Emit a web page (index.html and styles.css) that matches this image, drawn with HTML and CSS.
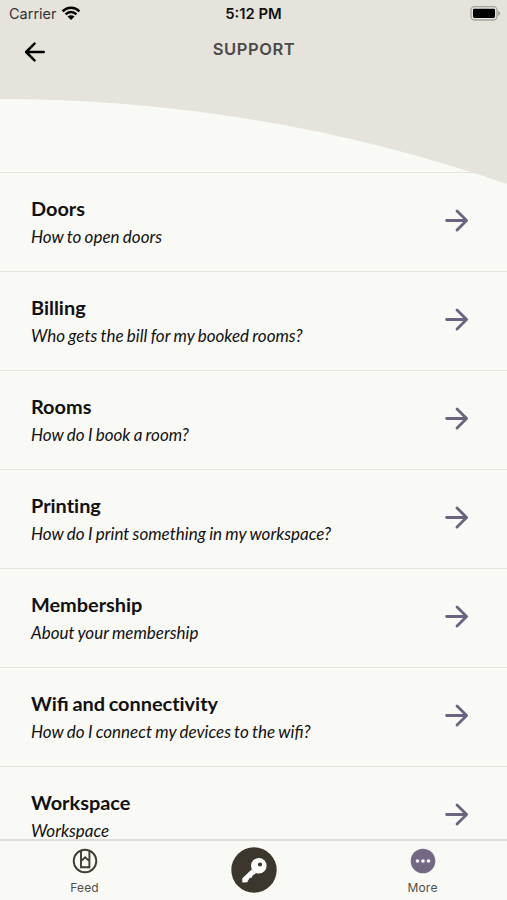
FILE: index.html
```
<!DOCTYPE html>
<html lang="en">
<head>
  <meta charset="UTF-8">
  <meta name="viewport" content="width=device-width, initial-scale=1.0">
  <title>Support</title>
  <link rel="stylesheet" href="styles.css">
</head>
<body>

  <!-- Shared icons -->
  <svg class="icon-defs" width="0" height="0">
    <symbol id="arrow" viewBox="0 0 24 24">
      <path d="M2.5 12H21.5M12.5 2.8L21.7 12L12.5 21.2" fill="none" stroke="currentColor" stroke-width="2.7" stroke-linecap="round" stroke-linejoin="round"/>
    </symbol>
  </svg>

  <div class="screen">
    <header class="header">
      <svg class="header-curve" viewBox="0 0 507 185">
        <path d="M0 0H507V184A1563 1563 0 0 0 0 99Z" fill="#e5e3db"/>
      </svg>

      <div class="status-bar">
        <div class="carrier">
          <span>Carrier</span>
          <svg width="20" height="15" viewBox="0 0 20 15">
            <path d="M1.6 5.3A12 12 0 0 1 18.4 5.3M4.6 8.3A7.7 7.7 0 0 1 15.4 8.3" fill="none" stroke="#000" stroke-width="2.5"/>
            <path d="M10 14L6.5 10.6A5 5 0 0 1 13.5 10.6Z" fill="#000"/>
          </svg>
        </div>
        <div class="time">5:12 PM</div>
        <div class="battery">
          <svg width="32" height="15" viewBox="0 0 32 15">
            <rect x="2" y="0.7" width="26" height="13.3" rx="3.5" fill="none" stroke="#a5a49f" stroke-width="1.3"/>
            <rect x="4" y="2.7" width="22" height="9.3" rx="1.4" fill="#000"/>
            <path d="M29.4 5C31.4 5.8 31.4 8.8 29.4 9.7Z" fill="#8c8b86"/>
          </svg>
        </div>
      </div>

      <div class="nav-bar">
        <svg class="back" width="22" height="22"><use href="#arrow"/></svg>
        <h1 class="page-title">SUPPORT</h1>
      </div>
    </header>

    <main class="list">
      <div class="row">
        <div>
          <h2>Doors</h2>
          <p>How to open doors</p>
        </div>
        <svg class="arrow"><use href="#arrow"/></svg>
      </div>
      <div class="row">
        <div>
          <h2>Billing</h2>
          <p>Who gets the bill for my booked rooms?</p>
        </div>
        <svg class="arrow"><use href="#arrow"/></svg>
      </div>
      <div class="row">
        <div>
          <h2>Rooms</h2>
          <p>How do I book a room?</p>
        </div>
        <svg class="arrow"><use href="#arrow"/></svg>
      </div>
      <div class="row">
        <div>
          <h2>Print&zwnj;ing</h2>
          <p>How do I print something in my workspace?</p>
        </div>
        <svg class="arrow"><use href="#arrow"/></svg>
      </div>
      <div class="row">
        <div>
          <h2>Membership</h2>
          <p>About your membership</p>
        </div>
        <svg class="arrow"><use href="#arrow"/></svg>
      </div>
      <div class="row">
        <div>
          <h2>Wifi and connect&zwnj;ivity</h2>
          <p>How do I connect my devices to the wifi?</p>
        </div>
        <svg class="arrow"><use href="#arrow"/></svg>
      </div>
      <div class="row">
        <div>
          <h2>Workspace</h2>
          <p>Workspace</p>
        </div>
        <svg class="arrow"><use href="#arrow"/></svg>
      </div>
    </main>

    <nav class="tab-bar">
      <a class="tab">
        <svg width="26" height="26" viewBox="0 0 26 26" fill="none" stroke="#403d33" stroke-width="1.9">
          <circle cx="13" cy="13" r="11.3"/>
          <path d="M9 2.5V19.3H17.4V2.5M9.6 12.6L13.2 9.2L16.8 12.6" stroke-width="1.9"/>
        </svg>
        <span>Feed</span>
      </a>
      <a class="tab tab-key">
        <svg width="46" height="46" viewBox="0 0 46 46">
          <circle cx="23" cy="23" r="22.7" fill="#3b372d"/>
          <circle cx="27.8" cy="18.8" r="7.8" fill="#fff"/>
          <path d="M20.6 22.6L25 26.2L21.6 28.4L20.8 30.6L18.6 31L16.2 35.2L11.4 35.6L11.2 31.6Z" fill="#fff"/>
          <circle cx="29" cy="17.5" r="2.1" fill="#3b372d"/>
        </svg>
      </a>
      <a class="tab">
        <svg width="26" height="26" viewBox="0 0 26 26">
          <circle cx="13" cy="13" r="12.3" fill="#736985"/>
          <g fill="#fff">
            <circle cx="7.5" cy="13" r="1.8"/>
            <circle cx="13" cy="13" r="1.8"/>
            <circle cx="18.5" cy="13" r="1.8"/>
          </g>
        </svg>
        <span>More</span>
      </a>
    </nav>
  </div>

</body>
</html>
```
FILE: styles.css
```
* {
  box-sizing: border-box;
}

body {
  margin: 0;
  background-color: #f9f9f5;
  font-family: Inter, sans-serif;
  color: #111;
}

.icon-defs {
  position: absolute;
}

.screen {
  display: flex;
  flex-direction: column;
  height: 900px;
  overflow: hidden;
}

/* Header */
.header {
  position: relative;
  height: 172px;
  flex-shrink: 0;
}

/* The curve hangs over the top of the list */
.header-curve {
  position: absolute;
  top: 0;
  left: 0;
  width: 507px;
  height: 185px;
  z-index: 1;
}

.status-bar,
.nav-bar {
  position: relative;
  z-index: 2;
}

.status-bar {
  display: grid;
  grid-template-columns: 1fr auto 1fr;
  align-items: center;
  height: 27px;
  padding: 0 6px 0 9px;
  font-size: 15px;
}

.carrier {
  display: flex;
  align-items: center;
  gap: 4px;
  color: #333;
  font-size: 14.5px;
}

.time {
  margin-right: 3px;
  font-size: 14.8px;
  font-weight: 600;
  color: #111;
}

.battery {
  display: flex;
  justify-content: flex-end;
}

.nav-bar {
  display: grid;
  grid-template-columns: 22px 1fr 22px;
  align-items: center;
  height: 50px;
  padding: 0 23px 0 24px;
}

.back {
  transform: rotate(180deg);
  color: #000;
}

.page-title {
  margin: 0 0 6px;
  text-align: center;
  font-size: 16.5px;
  font-weight: 600;
  letter-spacing: 0.55px;
  color: #4a4a47;
}

/* List */
.list {
  flex: 1;
  min-height: 0;
  overflow: hidden;
  font-family: Lato, sans-serif;
}

.row {
  display: flex;
  align-items: center;
  justify-content: space-between;
  height: 99px;
  padding: 0 38px 0 31px;
  border-top: 1px solid #e5e5e0;
}

.row h2 {
  margin: 0;
  font-size: 19.9px;
  line-height: 26px;
  font-weight: 700;
  word-spacing: -1.2px;
}

.row p {
  margin: 2px 0 0;
  font-size: 17px;
  line-height: 27px;
  font-style: italic;
  word-spacing: -0.7px;
}

.arrow {
  width: 25px;
  height: 25px;
  margin-bottom: 3px;
  color: #6c6380;
}

/* Bottom tabs */
.tab-bar {
  display: grid;
  grid-template-columns: repeat(3, 1fr);
  height: 61px;
  flex-shrink: 0;
  border-top: 2px solid #dededa;
}

.tab {
  display: flex;
  flex-direction: column;
  align-items: center;
  gap: 6px;
  padding-top: 7px;
  font-size: 12px;
  line-height: 15px;
  letter-spacing: 0.2px;
  color: #504f4a;
}

.tab-key {
  padding-top: 6px;
}
```
